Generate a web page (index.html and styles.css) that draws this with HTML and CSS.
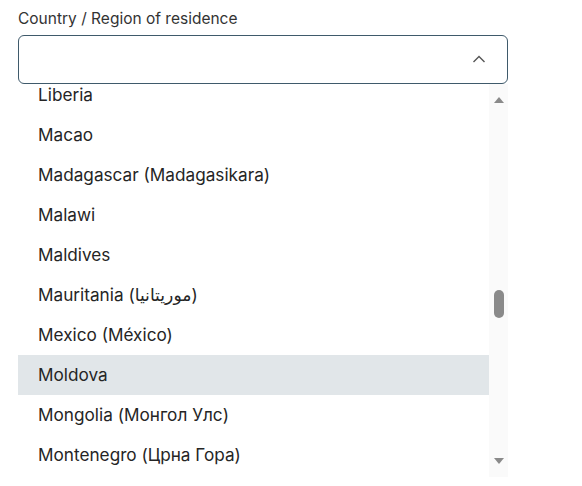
FILE: index.html
```html
<!DOCTYPE html>
<html>
<head>
<meta charset="utf-8">
<link rel="stylesheet" href="styles.css">
</head>
<body>
<div class="field">
  <label class="label">Country / Region of residence</label>
  <div class="select">
    <svg class="chevron" width="14" height="8" viewBox="0 0 14 8"><path d="M1.5 7 L7 1.5 L12.5 7" fill="none" stroke="#555" stroke-width="1.4"/></svg>
  </div>
  <div class="dropdown">
    <div class="viewport">
      <ul class="list">
        <li>Liberia</li>
        <li>Macao</li>
        <li>Madagascar (Madagasikara)</li>
        <li>Malawi</li>
        <li>Maldives</li>
        <li>Mauritania (<span dir="rtl">موريتانيا</span>)</li>
        <li>Mexico (México)</li>
        <li class="active">Moldova</li>
        <li>Mongolia (Монгол Улс)</li>
        <li>Montenegro (Црна Гора)</li>
      </ul>
    </div>
    <div class="scrollbar">
      <span class="arrow up"></span>
      <span class="thumb"></span>
      <span class="arrow down"></span>
    </div>
  </div>
</div>
</body>
</html>
```

FILE: styles.css
```css
html, body {
  margin: 0;
  padding: 0;
  background: #fff;
}
body {
  font-family: Inter, "Noto Sans", "DejaVu Sans", sans-serif;
  color: #222;
}
.field {
  width: 490px;
  padding: 9px 0 0 18px;
  display: flex;
  flex-direction: column;
}
.label {
  font-size: 15.5px;
  line-height: 20px;
  color: #333;
  margin-bottom: 6px;
}
.select {
  height: 49px;
  box-sizing: border-box;
  border: 1.5px solid #3f5a6b;
  border-radius: 6px;
  display: flex;
  align-items: center;
  justify-content: flex-end;
  padding-right: 21px;
}
.chevron {
  display: block;
  margin-top: -1px;
}
.dropdown {
  display: flex;
  height: 393px;
}
.viewport {
  flex: 1;
  overflow: hidden;
}
.list {
  list-style: none;
  margin: -9px 0 0 0;
  padding: 0;
}
.list li {
  height: 40px;
  line-height: 40px;
  padding-left: 20px;
  font-size: 17.2px;
  color: #252525;
  white-space: nowrap;
}
.list li.active {
  background: #e1e6e9;
}
.scrollbar {
  width: 19px;
  background: #fafafa;
  display: flex;
  flex-direction: column;
  align-items: center;
  padding-top: 13px;
}
.arrow {
  width: 0;
  height: 0;
  border-left: 5px solid transparent;
  border-right: 5px solid transparent;
}
.arrow.up {
  border-bottom: 6px solid #8a8a8a;
}
.arrow.down {
  border-top: 6px solid #8a8a8a;
  margin-top: 140px;
}
.thumb {
  width: 10px;
  height: 28px;
  border-radius: 5px;
  background: #8a8a8a;
  margin-top: 187px;
}
```
